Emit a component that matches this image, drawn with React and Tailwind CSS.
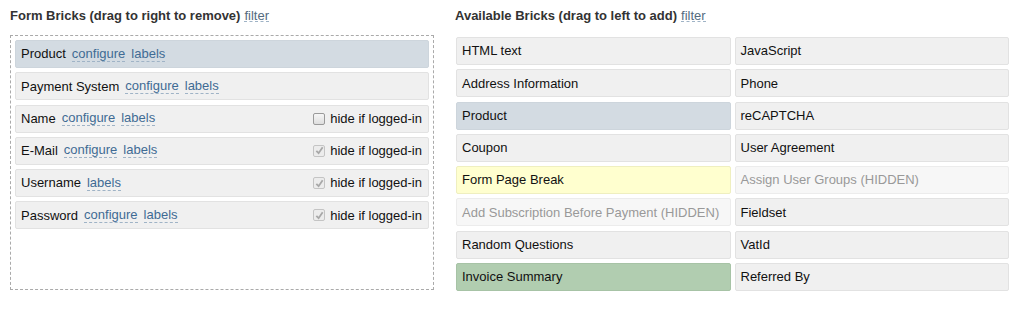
import React from 'react';

const FONT = { fontFamily: '"Liberation Sans", Arial, sans-serif' };

// bricks inside the form (left side)
const FORM_BRICKS = [
  { name: 'Product', links: ['configure', 'labels'], active: true },
  { name: 'Payment System', links: ['configure', 'labels'] },
  { name: 'Name', links: ['configure', 'labels'], hide: 'off' },
  { name: 'E-Mail', links: ['configure', 'labels'], hide: 'on' },
  { name: 'Username', links: ['labels'], hide: 'on' },
  { name: 'Password', links: ['configure', 'labels'], hide: 'on' },
];

// available bricks (right side), row by row
const AVAILABLE = [
  { name: 'HTML text' },
  { name: 'JavaScript' },
  { name: 'Address Information' },
  { name: 'Phone' },
  { name: 'Product', tone: 'active' },
  { name: 'reCAPTCHA' },
  { name: 'Coupon' },
  { name: 'User Agreement' },
  { name: 'Form Page Break', tone: 'yellow' },
  { name: 'Assign User Groups (HIDDEN)', tone: 'hidden' },
  { name: 'Add Subscription Before Payment (HIDDEN)', tone: 'hidden' },
  { name: 'Fieldset' },
  { name: 'Random Questions' },
  { name: 'VatId' },
  { name: 'Invoice Summary', tone: 'green' },
  { name: 'Referred By' },
];

const TONES = {
  plain: 'bg-[#f0f0f0] border-[#e2e2e2] text-[#111]',
  active: 'bg-[#d3dbe2] border-[#cdd5dc] text-[#111]',
  yellow: 'bg-[#ffffcf] border-[#efefc0] text-[#111]',
  green: 'bg-[#b1cdb0] border-[#a7c3a6] text-[#111]',
  hidden: 'bg-[#f7f7f7] border-[#ececec] text-[#999]',
};

const DashLink = ({ children }) => (
  <span className="text-[#3f6b94] border-b border-dashed border-[#9fb3c6] leading-[14px]">
    {children}
  </span>
);

const Check = ({ on }) => (
  <span
    className={`inline-flex items-center justify-center w-[12px] h-[12px] rounded-[2px] border ${
      on ? 'border-[#c4c4c4] bg-[#ececec]' : 'border-[#9a9a9a] bg-gradient-to-b from-[#f6f6f6] to-[#dedede]'
    }`}
  >
    {on && (
      <svg width="9" height="9" viewBox="0 0 10 10">
        <path d="M1.5 5.5 L4 8 L8.5 1.5" fill="none" stroke="#a8a8a8" strokeWidth="2" />
      </svg>
    )}
  </span>
);

const FormBrick = ({ brick }) => (
  <div
    className={`h-[28px] flex items-center px-[5px] border rounded-[2px] text-[13px] ${
      brick.active ? TONES.active : TONES.plain
    }`}
  >
    <span className="mr-[6px]">{brick.name}</span>
    <span className="flex gap-[6px]">
      {brick.links.map((l) => (
        <DashLink key={l}>{l}</DashLink>
      ))}
    </span>
    {brick.hide && (
      <span className="ml-auto flex items-center gap-[5px] pr-[1px]">
        <Check on={brick.hide === 'on'} />
        <span>hide if logged-in</span>
      </span>
    )}
  </div>
);

export default function App() {
  return (
    <div className="w-[1024px] h-[317px] bg-white flex text-[13px] text-[#222]" style={FONT}>
      <div className="ml-[10px] w-[424px] pt-[7px]">
        <div className="h-[21px] flex items-start leading-[17px]">
          <span className="font-bold text-[#333]">Form Bricks (drag to right to remove)</span>
          <span className="ml-[4px] text-[#546b80] border-b border-dashed border-[#9fb3c6] h-[15px]">
            filter
          </span>
        </div>
        <div className="mt-[7px] h-[255px] border border-dashed border-[#aaa] p-[4px] flex flex-col gap-[4.25px]">
          {FORM_BRICKS.map((b) => (
            <FormBrick key={b.name} brick={b} />
          ))}
        </div>
      </div>

      <div className="ml-[21px] w-[554px] pt-[7px]">
        <div className="h-[21px] flex items-start leading-[17px]">
          <span className="font-bold text-[#333]">Available Bricks (drag to left to add)</span>
          <span className="ml-[4px] text-[#546b80] border-b border-dashed border-[#9fb3c6] h-[15px]">
            filter
          </span>
        </div>
        <div className="mt-[9px] ml-[1px] w-[553px] grid grid-cols-2 gap-x-[4px] gap-y-[4.25px]">
          {AVAILABLE.map((b, i) => (
            <div
              key={i}
              className={`h-[28px] flex items-center px-[5px] border rounded-[2px] whitespace-nowrap ${
                TONES[b.tone || 'plain']
              }`}
            >
              {b.name}
            </div>
          ))}
        </div>
      </div>
    </div>
  );
}
